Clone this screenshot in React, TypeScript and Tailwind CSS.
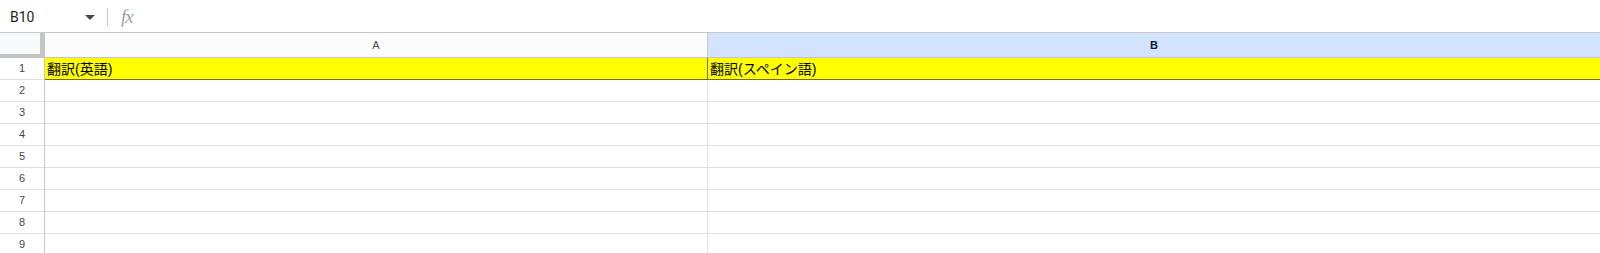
import React from "react";

const rows = [2, 3, 4, 5, 6, 7, 8, 9];
const cellFont = { fontFamily: "Arial, 'Liberation Sans', 'Noto Sans CJK JP', sans-serif" };

export default function App() {
  return (
    <div className="w-[1600px] h-[253px] overflow-hidden bg-white" style={{ fontFamily: "'Liberation Sans', Arial, 'Noto Sans CJK JP', sans-serif" }}>
      {/* toolbar */}
      <div className="h-[32px] flex items-center pt-[2px] bg-white">
        <div className="w-[80px] pl-[10px] text-[14px] text-[#1f1f1f]" style={{ fontFamily: "Roboto, Arial, sans-serif" }}>B10</div>
        <div className="w-[20px] flex items-center justify-start pl-[5px]">
          <svg width="10" height="5" viewBox="0 0 10 5"><path d="M0 0 L10 0 L5 5 Z" fill="#444746" /></svg>
        </div>
        <div className="ml-[7px] w-px h-[18px] bg-[#c7c7c7]" />
        <div className="ml-[13px] text-[19px] italic text-[#a0a0a0] tracking-[-1px]" style={{ fontFamily: "'Liberation Serif', 'Times New Roman', serif" }}>fx</div>
      </div>
      {/* column header */}
      <div className="flex h-[26px] border-t border-[#c7c7c7]">
        <div className="w-[44px] flex flex-col shrink-0">
          <div className="flex flex-1">
            <div className="w-[40px] bg-[#f8f9fa]" />
            <div className="w-[4px] bg-[#c4c4c4]" />
          </div>
          <div className="h-[4px] bg-[#c4c4c4]" />
        </div>
        <div className="w-px bg-[#c4c7c5]" />
        <div className="w-[663px] shrink-0 flex items-center justify-center text-[11px] text-[#444746] bg-[#fcfcfc] border-b border-[#c4c7c5] border-r" style={cellFont}>A</div>
        <div className="flex-1 flex items-center justify-center text-[11px] font-bold text-[#0b1a33] bg-[#d3e3fd] border-b border-[#c4c7c5]" style={cellFont}>B</div>
      </div>
      {/* row 1 */}
      <div className="flex h-[22px]">
        <div className="w-[44px] shrink-0 flex items-center justify-center text-[11px] text-[#444746] border-b border-[#e1e1e1]" style={cellFont}>1</div>
        <div className="w-px bg-[#c4c7c5]" />
        <div className="w-[663px] shrink-0 flex items-center pl-[2px] pt-[1px] bg-[#ffff00] text-[14px] text-black border-b border-r border-[#6f6f1f]" style={cellFont}>翻訳(英語)</div>
        <div className="flex-1 flex items-center pl-[2px] pt-[1px] bg-[#ffff00] text-[14px] text-black border-b border-[#6f6f1f]" style={cellFont}>翻訳(スペイン語)</div>
      </div>
      {rows.map((r) => (
        <div key={r} className="flex h-[22px]">
          <div className="w-[44px] shrink-0 flex items-center justify-center text-[11px] text-[#444746] border-b border-[#e1e1e1]" style={cellFont}>{r}</div>
          <div className="w-px bg-[#c4c7c5]" />
          <div className="w-[663px] shrink-0 border-b border-r border-[#e1e1e1]" />
          <div className="flex-1 border-b border-[#e1e1e1]" />
        </div>
      ))}
    </div>
  );
}
